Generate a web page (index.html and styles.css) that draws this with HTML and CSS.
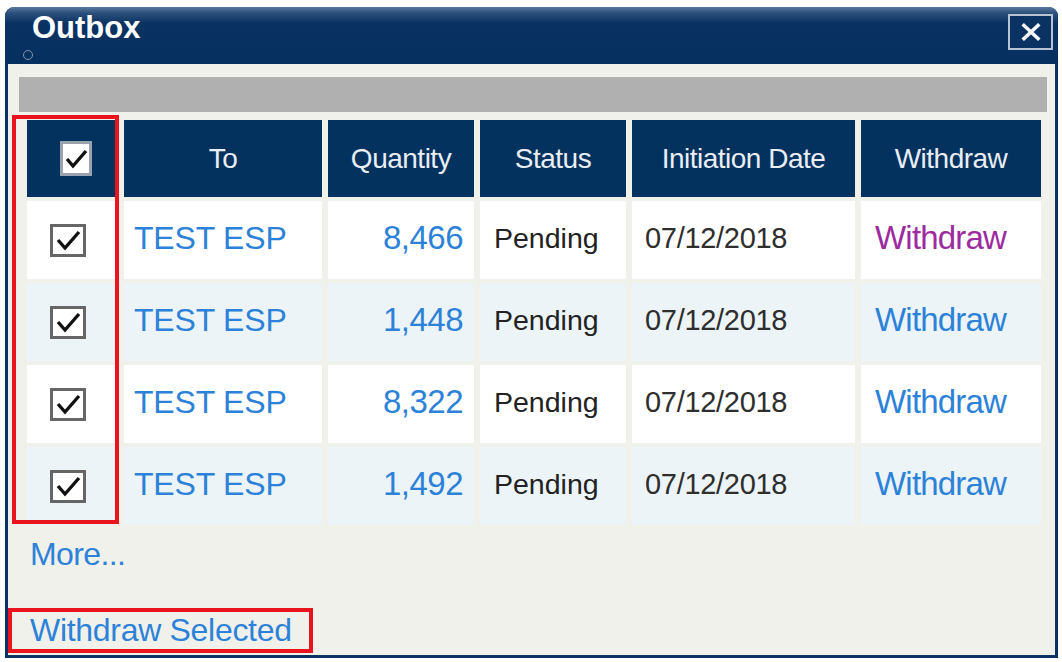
FILE: index.html
```html
<!DOCTYPE html>
<html>
<head>
<meta charset="utf-8">
<link rel="stylesheet" href="styles.css">
</head>
<body>
<div class="window">
  <div class="titlebar">
    <div class="title-col">
      <div class="title">Outbox</div>
      <span class="dot"></span>
    </div>
    <div class="close">
      <svg width="22" height="18" viewBox="0 0 22 18"><path d="M4 2.5 L18 15.5 M18 2.5 L4 15.5" stroke="#f4f6fa" stroke-width="3.6" stroke-linecap="square"/></svg>
    </div>
  </div>
  <div class="content">
    <div class="graybar"></div>
    <div class="grid">
      <div class="hl-box"></div>
      <div class="hcell cb"><svg class="chk" width="32" height="35" viewBox="0 0 32 35"><rect x="1.5" y="1.5" width="29" height="32" fill="#fff" stroke="#9aa3ad" stroke-width="3"/><path d="M7 18 L13 25 L26 10" fill="none" stroke="#111" stroke-width="3.4"/></svg></div>
      <div class="hcell">To</div>
      <div class="hcell">Quantity</div>
      <div class="hcell">Status</div>
      <div class="hcell">Initiation Date</div>
      <div class="hcell">Withdraw</div>

      <div class="cell cb"><svg class="chk" width="36" height="33" viewBox="0 0 36 33"><rect x="1.5" y="1.5" width="33" height="30" fill="#fff" stroke="#666" stroke-width="3"/><path d="M8 16 L15 24 L29 8" fill="none" stroke="#111" stroke-width="3.4"/></svg></div>
      <div class="cell to">TEST ESP</div>
      <div class="cell qty">8,466</div>
      <div class="cell status">Pending</div>
      <div class="cell date">07/12/2018</div>
      <div class="cell wd visited">Withdraw</div>

      <div class="cell alt cb"><svg class="chk" width="36" height="33" viewBox="0 0 36 33"><rect x="1.5" y="1.5" width="33" height="30" fill="#fff" stroke="#666" stroke-width="3"/><path d="M8 16 L15 24 L29 8" fill="none" stroke="#111" stroke-width="3.4"/></svg></div>
      <div class="cell alt to">TEST ESP</div>
      <div class="cell alt qty">1,448</div>
      <div class="cell alt status">Pending</div>
      <div class="cell alt date">07/12/2018</div>
      <div class="cell alt wd">Withdraw</div>

      <div class="cell cb"><svg class="chk" width="36" height="33" viewBox="0 0 36 33"><rect x="1.5" y="1.5" width="33" height="30" fill="#fff" stroke="#666" stroke-width="3"/><path d="M8 16 L15 24 L29 8" fill="none" stroke="#111" stroke-width="3.4"/></svg></div>
      <div class="cell to">TEST ESP</div>
      <div class="cell qty">8,322</div>
      <div class="cell status">Pending</div>
      <div class="cell date">07/12/2018</div>
      <div class="cell wd">Withdraw</div>

      <div class="cell alt cb"><svg class="chk" width="36" height="33" viewBox="0 0 36 33"><rect x="1.5" y="1.5" width="33" height="30" fill="#fff" stroke="#666" stroke-width="3"/><path d="M8 16 L15 24 L29 8" fill="none" stroke="#111" stroke-width="3.4"/></svg></div>
      <div class="cell alt to">TEST ESP</div>
      <div class="cell alt qty">1,492</div>
      <div class="cell alt status">Pending</div>
      <div class="cell alt date">07/12/2018</div>
      <div class="cell alt wd">Withdraw</div>
    </div>
    <div class="more">More...</div>
    <div class="footer">
      <span class="wsel">Withdraw Selected</span>
    </div>
  </div>
</div>
</body>
</html>
```

FILE: styles.css
```css
* { box-sizing: border-box; }
html, body { margin: 0; padding: 0; background: #ffffff; }
body {
  font-family: "Liberation Sans", Arial, sans-serif;
  width: 1062px;
  height: 662px;
  overflow: hidden;
}
.window {
  margin: 7px 4px 0 5px;
  height: 651px;
  background: #0b3463;
  border-radius: 9px 9px 0 0;
  padding: 0 3px 3px 3px;
  display: flex;
  flex-direction: column;
}
.titlebar {
  height: 57px;
  flex: none;
  display: flex;
  align-items: flex-start;
  background: linear-gradient(#5a7ba0 0px, #2c507c 6px, #0a3262 16px, #05305f 57px);
  margin: 0 -3px;
  border-radius: 9px 9px 0 0;
  padding: 0 5px 0 18px;
}
.title-col {
  display: flex;
  flex-direction: column;
}
.title {
  color: #ffffff;
  font-weight: bold;
  font-size: 31px;
  line-height: 34px;
  margin: 4px 0 0 9px;
  letter-spacing: 0;
}
.dot {
  width: 10px;
  height: 10px;
  border-radius: 50%;
  border: 1px solid #8393ab;
  margin: 5px 0 0 0;
}
.close {
  margin-left: auto;
  margin-top: 7px;
  width: 45px;
  height: 36px;
  border: 2px solid #b9c3d2;
  display: flex;
  align-items: center;
  justify-content: center;
  background: #0a3262;
}
.content {
  flex: 1;
  background: #f1f1ec;
  display: flex;
  flex-direction: column;
  padding-top: 13px;
}
.graybar {
  height: 35px;
  margin: 0 8px 0 11px;
  background: #b0b0b0;
}
.grid {
  position: relative;
  margin: 8px 0 0 19px;
  display: grid;
  grid-template-columns: 91px 198px 146px 146px 223px 180px;
  grid-template-rows: 77px repeat(4, 78px);
  column-gap: 6px;
  row-gap: 4px;
  width: 1014px;
}
.hl-box {
  position: absolute;
  left: -15px;
  top: -5px;
  width: 107px;
  height: 409px;
  border: 4px solid #e8151f;
  z-index: 2;
  pointer-events: none;
}
.hcell {
  background: #03325f;
  color: #e9eef5;
  font-size: 28px;
  letter-spacing: -0.5px;
  display: flex;
  align-items: center;
  justify-content: center;
}
.cell {
  background: #ffffff;
  display: flex;
  align-items: center;
  font-size: 30px;
  padding-bottom: 4px;
}
.cell.alt { background: #ecf4f8; }
.cb { justify-content: center; padding-bottom: 0; }
.hcell.cb { padding-left: 6px; }
.cell.cb { padding-right: 9px; }
.chk { display: block; }
.to {
  color: #2c82d8;
  padding-left: 10px;
  font-size: 32px;
  letter-spacing: -0.2px;
}
.qty {
  color: #2c82d8;
  justify-content: flex-end;
  padding-right: 11px;
  font-size: 33px;
  letter-spacing: -0.5px;
}
.status {
  color: #222222;
  padding-left: 14px;
  font-size: 28.5px;
}
.date {
  color: #2e2e2e;
  padding-left: 13px;
  font-size: 29px;
  letter-spacing: -0.3px;
}
.wd {
  color: #2c82d8;
  padding-left: 14px;
  font-size: 33px;
  letter-spacing: -0.8px;
}
.wd.visited { color: #9c2b9f; }
.more {
  color: #2c82d8;
  font-size: 32px;
  letter-spacing: -0.6px;
  margin: 12px 0 0 22px;
  line-height: 34px;
}
.footer {
  margin-top: auto;
  padding: 0 0 2px 0;
}
.wsel {
  display: inline-block;
  border: 4px solid #e8151f;
  color: #2c82d8;
  font-size: 32px;
  letter-spacing: -0.3px;
  line-height: 37px;
  padding: 0 17px 0 18px;
}
```
